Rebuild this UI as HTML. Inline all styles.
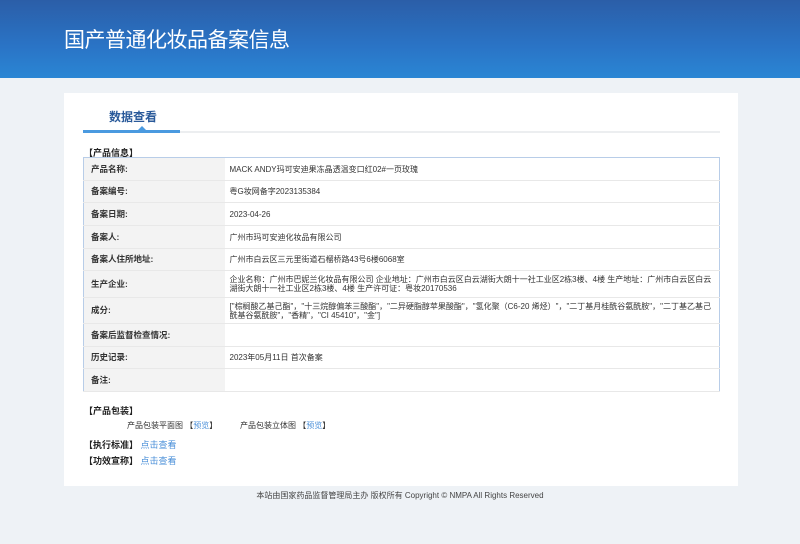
<!DOCTYPE html>
<html><head><meta charset="utf-8"><style>
*{margin:0;padding:0;box-sizing:border-box}
body{width:800px;height:544px;background:#eef2f6;font-family:"Liberation Sans","Noto Sans CJK SC",sans-serif;position:relative;overflow:hidden}
.hd{position:absolute;left:0;top:0;width:800px;height:78px;background:linear-gradient(180deg,#2b5ea8 0%,#2a74c6 60%,#2a86d4 100%)}
.hd h1{position:absolute;left:64px;top:24px;font-size:21px;font-weight:normal;color:#fff;letter-spacing:-0.5px}
.panel{position:absolute;left:64px;top:93px;width:674px;height:393px;background:#fff}
.tab{position:absolute;left:45px;top:15px;font-size:12px;color:#2a5a9a;font-weight:bold}
.line{position:absolute;left:19px;top:38px;width:637px;height:2px;background:#eceef0}
.line2{position:absolute;left:19px;top:37px;width:97px;height:3px;background:#4a9ae0}
.tri{position:absolute;left:74px;top:33px;width:0;height:0;border-left:4px solid transparent;border-right:4px solid transparent;border-bottom:4px solid #4a9ae0}
.sec{position:absolute;font-size:9px;font-weight:bold;color:#222}
table{position:absolute;left:19px;top:64px;width:637px;border-collapse:collapse;border:1px solid #b8cde8;font-size:8px;color:#333}
td{border-bottom:1px solid #e8e8e8;padding:0 7px;line-height:9px}
td.l{width:141px;background:#f3f3f3;font-weight:bold;font-size:8.5px;color:#333}
td.v{padding-left:5px}
.a{color:#4a8fd8}
.f{position:absolute;left:0;top:490px;width:800px;text-align:center;font-size:8px;color:#444}
.t{position:absolute;font-size:8px;color:#333}
</style></head><body>
<div class="hd"><h1>国产普通化妆品备案信息</h1></div>
<div class="panel">
<div class="tab">数据查看</div>
<div class="line"></div><div class="line2"></div><div class="tri"></div>
<div class="sec" style="left:20px;top:53px">【产品信息】</div>
<table>
<tr style="height:23px"><td class="l">产品名称:</td><td class="v">MACK ANDY玛可安迪果冻晶透温变口红02#一页玫瑰</td></tr>
<tr style="height:22px"><td class="l">备案编号:</td><td class="v">粤G妆网备字2023135384</td></tr>
<tr style="height:23px"><td class="l">备案日期:</td><td class="v">2023-04-26</td></tr>
<tr style="height:23px"><td class="l">备案人:</td><td class="v">广州市玛可安迪化妆品有限公司</td></tr>
<tr style="height:22px"><td class="l">备案人住所地址:</td><td class="v">广州市白云区三元里街道石榴桥路43号6楼6068室</td></tr>
<tr style="height:27px"><td class="l">生产企业:</td><td class="v">企业名称：广州市巴妮兰化妆品有限公司 企业地址：广州市白云区白云湖街大朗十一社工业区2栋3楼、4楼 生产地址：广州市白云区白云湖街大朗十一社工业区2栋3楼、4楼 生产许可证：粤妆20170536</td></tr>
<tr style="height:26px"><td class="l">成分:</td><td class="v">["棕榈酸乙基己酯"，"十三烷醇偏苯三酸酯"，"二异硬脂醇苹果酸酯"，"氢化聚（C6-20 烯烃）"，"二丁基月桂酰谷氨酰胺"，"二丁基乙基己酰基谷氨酰胺"，"香精"，"CI 45410"，"金"]</td></tr>
<tr style="height:23px"><td class="l">备案后监督检查情况:</td><td class="v"></td></tr>
<tr style="height:22px"><td class="l">历史记录:</td><td class="v">2023年05月11日 首次备案</td></tr>
<tr style="height:23px"><td class="l">备注:</td><td class="v"></td></tr>
</table>
<div class="sec" style="left:20px;top:311px">【产品包装】</div>
<div class="t" style="left:63px;top:327px">产品包装平面图 【<span class="a">预览</span>】</div>
<div class="t" style="left:176px;top:327px">产品包装立体图 【<span class="a">预览</span>】</div>
<div class="sec" style="left:20px;top:345px">【执行标准】 <span class="a" style="font-weight:normal">点击查看</span></div>
<div class="sec" style="left:20px;top:361px">【功效宣称】 <span class="a" style="font-weight:normal">点击查看</span></div>
</div>
<div class="f">本站由国家药品监督管理局主办 版权所有 Copyright © NMPA All Rights Reserved</div>
</body></html>
